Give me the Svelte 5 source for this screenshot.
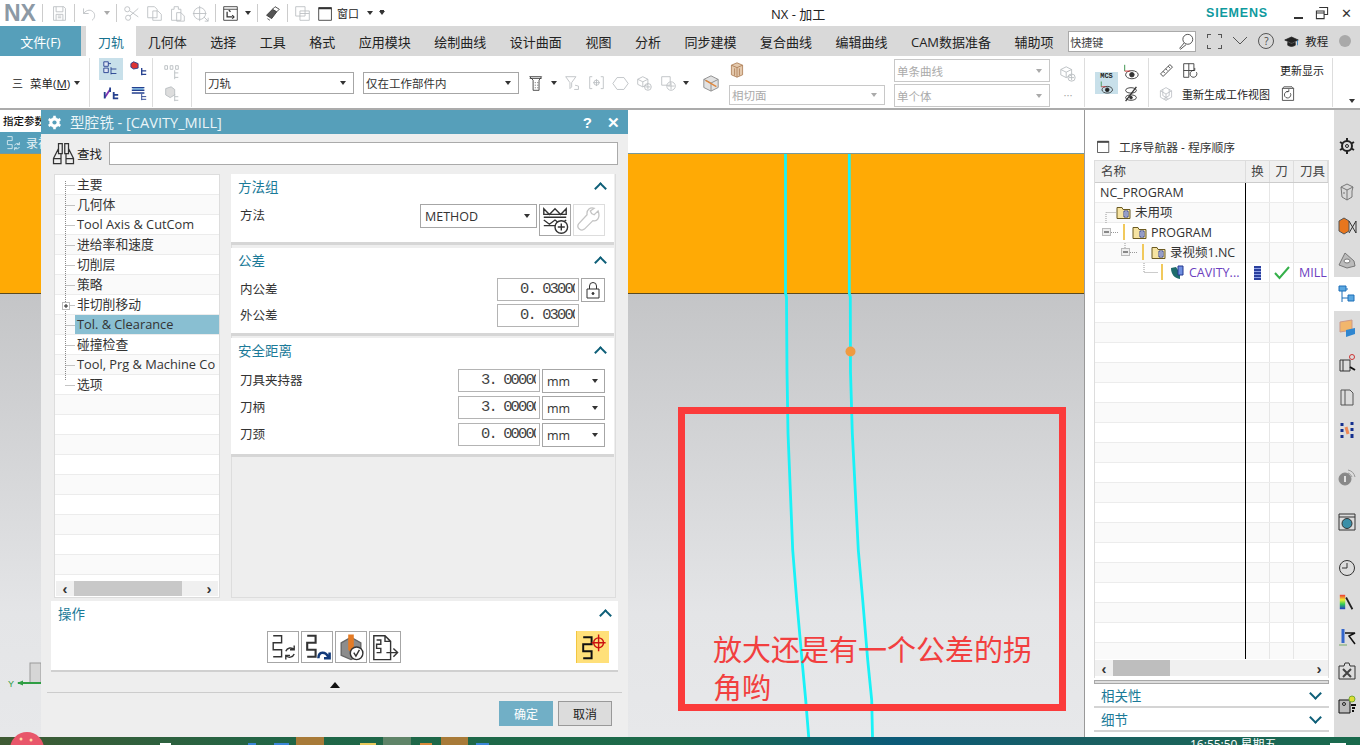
<script lang="ts">
  const tabs = ['几何体', '选择', '工具', '格式', '应用模块', '绘制曲线', '设计曲面', '视图', '分析', '同步建模', '复合曲线', '编辑曲线', 'CAM数据准备', '辅助项'];

  const treeItems = ['主要', '几何体', 'Tool Axis & CutCom', '进给率和速度', '切削层', '策略', '非切削移动', 'Tol. & Clearance', '碰撞检查', 'Tool, Prg & Machine Co', '选项'];
  const treeRows = Array.from({ length: 20 }, (_, i) => treeItems[i] ?? '');

  const navRows = [
    { name: 'NC_PROGRAM', pad: 5 },
    { name: '未用项', pad: 21, icon: 'folder' },
    { name: 'PROGRAM', pad: 37, icon: 'folder' },
    { name: '录视频1.NC', pad: 56, icon: 'folder' },
    { name: 'CAVITY...', pad: 75, icon: 'mill', op: true }
  ];
  const navTable = Array.from({ length: 24 }, (_, i) => navRows[i] ?? { name: '', pad: 0 });

  const icons: Record<string, string> = {
    save: '<path d="M3 2h12l2 2v14H3z"/><path d="M6 2v6h8V2M6 18v-7h8v7M8 13h4M8 15h4"/>',
    undo: '<path d="M3 4v6h6M3 10c4-5 9-5 12-1 2 3 1 7-2 9"/>',
    scissors: '<circle cx="5" cy="5" r="3"/><circle cx="6" cy="15" r="3"/><path d="M8 7l10 7M8 13l10-9"/>',
    copy: '<path d="M2 2h8l3 3v10H2zM8 7h6l4 4v7H8z"/>',
    paste: '<path d="M3 5h3V2h5v3h3v13H3zM9 9h5l4 4v6H9z"/>',
    target: '<circle cx="9" cy="10" r="7"/><path d="M9 1v18M1 10h16M14 14l5 5M19 15v4h-4"/>',
    swap: '<path d="M2 2h16v16H2zM2 5h16"/><path stroke-width="1.5" d="M6 8v6h6M12 12l2 2-2 2M10 8l-2-2"/>',
    win: '<path d="M2 3h15v15H2z"/><path stroke-width="2" d="M2 4h15"/>',
    winFaint: '<path d="M2 2h11v11H2zM7 7h11v11H7zM7 10h11"/>',
    restore: '<path stroke-width="1.5" d="M6 2h12v10h-5M2 7h11v11H2zM2 10h11"/>',
    binoculars: '<path d="M6 2h3v8H6zM11 2h3v8h-3zM6 6L2 14v4h6v-8M14 6l4 8v4h-6v-8M2 14h6M12 14h6"/>',
    gear: '<path stroke-width="3.4" d="M10 1v18M2.200 5.500l15.600 9M2.200 14.500l15.600-9"/><circle cx="10" cy="10" r="6.400" fill="currentColor"/><circle cx="10" cy="10" r="2.800" fill="#569fba" stroke="none"/>',
    gearDark: '<circle cx="10" cy="10" r="5" stroke-width="2"/><circle cx="10" cy="10" r="1.500"/><path stroke-width="2" d="M10 2v3M10 15v3M3 6l2.500 1.500M14.500 12.500L17 14M3 14l2.500-1.500M14.500 7.500L17 6"/>',
    search: '<circle cx="12" cy="7" r="5.500"/><path d="M8 11l-5 6 1 1 6-5"/>',
    lock: '<path d="M4 9h12v9H4zM6.500 9V6a3.500 3.500 0 0 1 7 0v3"/><circle cx="10" cy="13.500" r="1" fill="currentColor"/>',
    wrench: '<path d="M17 3l-3 3-2-1-1-2 3-2c-3-1-6 1-5.500 5L2 13c-2 3 2 6 4.500 4l6.500-6.500c3 1 6-2 4-7.500z"/>',
    methodAdd: '<path d="M2 2l4 4 4-4 4 4 4-4v4H2zM2 8h16M2 10l4 3 4-3 4 3 4-3M2 14h10"/><circle cx="14.500" cy="15" r="4.500" fill="#fff"/><path d="M14.500 12.500v5M12 15h5"/>',
    cube: '<path fill="#e2e2e2" d="M10 2l8 4v9l-8 4-8-4V6z"/><path d="M2 6l8 4 8-4M10 10v9"/><path stroke="#e0863a" stroke-width="1.500" d="M4 7l12 7"/>',
    cubeTop: '<path fill="#e4c9ad" d="M10 1l7 3v12l-7 3-7-3V4z"/><path d="M3 4l7 3 7-3M10 7v12M7 8v9M13 8v9"/>',
    filter: '<path d="M2 2h12l-5 7v5l-2 2V9zM13 12l4 1v4h-5"/>',
    filterDoc: '<path d="M2 2h14l-3 4v12H6V6z"/><path d="M2 4h14M8 9h1M11 9h1M8 12h1M11 12h1M8 15h1M11 15h1"/>',
    bracket: '<path d="M5 2H2v14h3M15 2h3v14h-3"/><circle cx="10" cy="9" r="3"/><path d="M10 5v8M6 9h8"/>',
    hex: '<path d="M6 3h8l5 7-5 7H6l-5-7z"/>',
    cubePlus: '<path d="M8 2l6 3v6l-6 3-6-3V5zM2 5l6 3 6-3M8 8v6"/><circle cx="14" cy="14" r="4"/><path d="M14 11v6M11 14h6"/>',
    squarePlus: '<path d="M2 2h10v10H2z"/><circle cx="13" cy="13" r="5"/><path d="M13 9v8M9 13h8"/>',
    ruler: '<path d="M3 14L14 3l3 3L6 17zM6 11l2 2M9 8l2 2M12 5l2 2"/>',
    regen: '<path d="M2 2h12v8H8v8H2zM8 2v8M2 10h6"/><path d="M17 12a4 4 0 1 1-3-2M12 10h3v-3"/>',
    refresh: '<path d="M3 3h14v15H3zM3 3l2-2h10l2 2"/><path d="M13 9a4 4 0 1 1-3-2M8 7h3V4"/>',
    hub: '<path d="M10 2l7 4v8l-7 4-7-4V6zM3 6l7 4 7-4M10 10v8M6 4v8l7 4M14 4v8l-7 4"/>',
    eye: '<ellipse cx="11" cy="13" rx="7" ry="4.500"/><circle cx="11" cy="13" r="2.500" fill="currentColor"/><path stroke="#2b8a3e" d="M3 2v7"/><path stroke="#c22" d="M3 9h6"/>',
    eyeOff: '<ellipse cx="10" cy="6" rx="6" ry="3"/><ellipse cx="10" cy="14" rx="6" ry="3"/><circle cx="10" cy="14" r="1.500" fill="currentColor"/><path stroke-width="1.500" d="M4 18L16 2"/>',
    hat: '<path fill="currentColor" d="M1 8l9-4 9 4-9 4z"/><path fill="currentColor" d="M5 11v4c3 2 7 2 10 0v-4l-5 2z"/><path stroke="#27b" d="M18 8v7"/>',
    flow1: '<path d="M3 2h6v5H3v5h6v5H3"/><path d="M12 13a3.500 3.500 0 0 1 6-1M18 15a3.500 3.500 0 0 1-6 1M18 9v3h-3M12 19v-3h3"/>',
    flow2: '<path stroke-width="1.500" d="M3 2h6v5H3v5h6v5H3"/><path stroke="#123a7a" stroke-width="1.800" d="M11 18c0-5 5-5 7-1M19 14v4h-4"/>',
    verify: '<path fill="#8c8c8c" stroke="#666" d="M3 7l7-4 7 4v9l-7 3-7-3z"/><path fill="#e47b25" stroke="none" d="M8 1h4v11l-2 2-2-2z"/><circle cx="14" cy="14.500" r="4.500" fill="#fff"/><path d="M12 14l1.500 2.500L16 12"/>',
    report: '<path d="M2 2h8l4 4v13H2zM10 2v4h4"/><path d="M4 5h3v3H4v3h3v3H4"/><path d="M11 14h8M16 11l3 3-3 3"/>',
    flowTarget: '<path stroke="#111" stroke-width="1.400" d="M3 3h6v5H3v5h6v5H3"/><circle cx="14" cy="7" r="3.500" stroke="#c11"/><path stroke="#c11" d="M14 1v12M9 7h10"/>',
    viewA: '<path fill="#d8d8d8" d="M4 5l6-3 6 3-1 4v6l-5 3-5-3z"/><path d="M4 5l6 3 6-3M10 8v10M6 11h2"/>',
    viewB: '<path fill="#e8761d" stroke="#555" d="M2 5l5-3 5 3v10l-5 3-5-3z"/><path d="M12 5l7 12V5l-7 12"/>',
    viewC: '<path fill="#bbb" d="M2 15l6-12 9 8 1 5-8 2z"/><ellipse cx="10" cy="11" rx="3" ry="2" fill="#fff"/>',
    navTree: '<path stroke="#1c6fb8" d="M5 2v16M5 5h6M5 14h6"/><path fill="#5aa7e0" stroke="#1c6fb8" d="M2 2h7v5H2zM11 11h6v6h-6z"/>',
    part: '<path fill="#f2b66c" stroke="#c98" d="M3 3l12-2v10L3 13z"/><path fill="#2f86d0" stroke="none" d="M9 11l9-2v6l-9 3z"/>',
    machine: '<path d="M3 7h10v11H3zM6 7v11"/><path stroke="#111" stroke-width="2" d="M13 14l5 3"/><circle cx="15" cy="4" r="2.500" stroke="#c33"/>',
    book: '<path d="M4 3h9l3 3v12H4zM8 3v15"/>',
    nodes: '<path stroke="#14308f" stroke-width="3" d="M5 2v3M5 8v3M5 14v3M15 1v3M15 7v3M15 13v4"/><path stroke="#e85" stroke-width="3" d="M9 6l2 7"/>',
    info: '<circle cx="8" cy="12" r="6" fill="#888"/><path stroke="#fff" stroke-width="1.500" d="M8 9v6"/><path stroke="#999" d="M11 3c4 1 6 3 7 7M11 6c2 .5 3 2 4 4"/>',
    browser: '<path d="M2 2h16v16H2zM2 5h16"/><circle cx="10" cy="11.500" r="5" fill="#3b8fa8"/>',
    clock: '<circle cx="10" cy="10" r="7.500"/><path d="M10 5v5H5"/>',
    thermo: '<path stroke="#3366cc" stroke-width="3" d="M6 2v14"/><path stroke="#111" stroke-width="1.500" d="M8 6h10l-6 3 6 8"/><path stroke="#7a6" d="M2 18h8"/>',
    tools: '<path d="M2 5h5l1-3h4l1 3h5v13H2z"/><path stroke-width="2" stroke="#444" d="M6 8l8 8M14 8l-8 8"/>',
    roles: '<path fill="#bbb" stroke="#111" d="M2 5h11v13H2z"/><circle cx="7" cy="9" r="1.500"/><path stroke="#111" stroke-width="2" d="M14 10h5M15 13h3M15 16h2"/><circle cx="15" cy="4" r="3" fill="#dd3" stroke="#7a3"/>',
    tb1: '<path fill="#dfe6f5" stroke="#25408f" d="M2 2h5v5H2zM2 9h5v5H2z"/><path stroke="#25408f" d="M10 8v8M10 10h6M10 15h6M7 4h3"/>',
    tb2: '<path fill="#d33" stroke="#25408f" d="M4 2l5 2v5l-5 1-3-2V4z"/><path stroke="#25408f" stroke-width="1.500" d="M13 9v8M13 12h5M13 16h5"/>',
    tb3: '<path stroke="#8232b4" stroke-width="2" d="M3 15l6-9"/><path stroke="#25408f" stroke-width="2" d="M3 9v7M9 4v5M13 9v8M13 12h5M13 16h5"/>',
    tb4: '<path stroke="#25408f" stroke-width="1.600" d="M2 4h14M2 7h14M2 10h14"/><path stroke="#2c8fd0" d="M3 5.500h12"/><path stroke="#25408f" d="M13 11v7M13 14h5M13 17h5"/>',
    tb5: '<path d="M2 3h3v4H2zM8 3h3v4H8zM14 3h3v4h-3zM13 8v10M13 11h4M13 16h4"/>',
    tb6: '<path fill="#ddd" d="M3 4l6-2 4 3v6l-5 3-5-3zM13 10v8M13 13h4M13 17h4"/>',
    eraser: '<path fill="#555" d="M3 12l7-7 5 3-6 8z"/><path d="M10 5l3-3 5 3-3 3"/><path stroke="#555" d="M4 16l3 2"/>'
  };

  const sideIcons = [
    { i: 'gearDark', c: '#222' },
    { i: 'viewA', c: '#777', gap: true },
    { i: 'viewB', c: '#333' },
    { i: 'viewC', c: '#777' },
    { i: 'navTree', c: '#1c6fb8', on: true },
    { i: 'part', c: '#c98' },
    { i: 'machine', c: '#333' },
    { i: 'book', c: '#555' },
    { i: 'nodes', c: '#14308f' },
    { i: 'info', c: '#888', gap: true },
    { i: 'browser', c: '#333', gap: true },
    { i: 'clock', c: '#333', gap: true },
    { i: 'rainbow', c: '#333' },
    { i: 'thermo', c: '#333' },
    { i: 'tools', c: '#333' },
    { i: 'roles', c: '#222' }
  ];

  const opIcons = ['flow1', 'flow2', 'verify', 'report'];
  const line1 = '785.5,44 785.5,183 786.5,187 787,262 788,323 792.7,440 796.7,490 802,550 805.7,590 808.7,627';
  const line2 = '849.3,44 849.3,183 850.3,187 850.5,262 852.3,323 858.3,440 862.7,490 867.7,550 871.7,590 872.5,627';

  const trayMarks = [
    { x: 160, w: 11, color: '#fff' },
    { x: 248, w: 8, color: '#3b86d8' },
    { x: 274, w: 15, color: '#3b86d8' },
    { x: 296, w: 28, color: '#a87a38', tall: true },
    { x: 360, w: 16, color: '#e8c95c' },
    { x: 383, w: 28, color: '#5f8468', tall: true },
    { x: 420, w: 12, color: '#d9893a' },
    { x: 441, w: 27, color: '#a87a38', tall: true },
    { x: 476, w: 13, color: '#3b86d8' },
    { x: 1330, w: 16, color: '#fff' }
  ];
</script>

{#snippet ic(name: string, size = 18)}
  <svg class="ic" width={size} height={size} viewBox="0 0 20 20" fill="none" stroke="currentColor" stroke-width="1">{@html icons[name]}</svg>
{/snippet}

<div class="app">
  <header class="titlebar">
    <div class="quick">
      <span class="nx">NX</span>
      <i class="vsep first"></i>
      <span class="faint">{@render ic('save', 17)}</span>
      <i class="vsep"></i>
      <span class="faint">{@render ic('undo', 17)}</span>
      <i class="arrow faintarrow"></i>
      <i class="vsep"></i>
      <span class="faint">{@render ic('scissors', 17)}</span>
      <span class="faint">{@render ic('copy', 17)}</span>
      <span class="faint">{@render ic('paste', 17)}</span>
      <span class="faint">{@render ic('target', 17)}</span>
      <i class="vsep"></i>
      <span class="dark">{@render ic('swap', 17)}</span>
      <i class="arrow"></i>
      <i class="vsep"></i>
      <span class="dark">{@render ic('eraser', 17)}</span>
      <i class="vsep"></i>
      <span class="faint">{@render ic('winFaint', 17)}</span>
      <span class="dark">{@render ic('win', 17)}</span>
      <span class="winlabel">窗口</span>
      <i class="arrow"></i>
      <i class="arrow underline"></i>
    </div>
    <div class="apptitle">NX - 加工</div>
    <div class="brand">SIEMENS</div>
    <div class="winbtns">
      <span class="wmin"></span>
      <span class="dark">{@render ic('restore', 14)}</span>
      <span class="wclose">✕</span>
    </div>
  </header>

  <nav class="tabbar">
    <div class="filetab">文件(F)</div>
    <div class="tab active">刀轨</div>
    {#each tabs as t}
      <div class="tab">{t}</div>
    {/each}
    <div class="cmdfind">
      <span>快捷键</span>
      {@render ic('search', 18)}
    </div>
    <div class="tabtools">
      <span class="corners"></span>
      <svg width="16" height="10" viewBox="0 0 16 10" fill="none" stroke="#555"><path d="M1 1l7 7 7-7" /></svg>
      <span class="help">?</span>
      <span class="hat">{@render ic('hat', 15)}</span>
      <span class="learn">教程</span>
      <span class="orb"></span>
    </div>
  </nav>

  <section class="ribbon">
    <div class="rgroup menu">
      <span class="burger">三</span>
      <span>菜单(<u>M</u>)</span>
      <i class="arrow"></i>
    </div>
    <div class="rgroup quad">
      <span class="qbtn on">{@render ic('tb1', 18)}</span>
      <span class="qbtn">{@render ic('tb2', 18)}</span>
      <span class="qbtn">{@render ic('tb3', 18)}</span>
      <span class="qbtn">{@render ic('tb4', 18)}</span>
    </div>
    <div class="rgroup duo">
      <span class="faint">{@render ic('tb5', 18)}</span>
      <span class="faint">{@render ic('tb6', 18)}</span>
    </div>
    <div class="rgroup filters">
      <div class="sel w149">刀轨<i class="arrow"></i></div>
      <div class="sel w156">仅在工作部件内<i class="arrow"></i></div>
      <div class="snapicons">
        <span class="dark">{@render ic('filterDoc', 17)}</span>
        <i class="arrow snaparrow"></i>
        <span class="faint">{@render ic('filter', 17)}</span>
        <span class="faint">{@render ic('bracket', 17)}</span>
        <span class="faint">{@render ic('hex', 17)}</span>
        <span class="faint">{@render ic('cubePlus', 17)}</span>
        <span class="faint">{@render ic('squarePlus', 17)}</span>
        <i class="arrow snaparrow"></i>
        <span class="cube">{@render ic('cube', 18)}</span>
      </div>
      <div class="tangent">
        <span class="smallcube">{@render ic('cubeTop', 16)}</span>
        <div class="sel off w156">相切面<i class="arrow"></i></div>
      </div>
      <div class="curvesel">
        <div class="sel off w156">单条曲线<i class="arrow"></i></div>
        <div class="sel off w156">单个体<i class="arrow"></i></div>
      </div>
      <div class="curveside">
        <span class="faint">{@render ic('cubePlus', 18)}</span>
        <span class="dots">···</span>
      </div>
    </div>
    <div class="rgroup mcs">
      <span class="mcsbtn"><b>MCS</b>{@render ic('eye', 15)}</span>
      <div class="eyes">
        <span class="dark">{@render ic('eye', 18)}</span>
        <span class="dark">{@render ic('eyeOff', 18)}</span>
      </div>
    </div>
    <div class="rgroup update">
      <span class="dark">{@render ic('ruler', 17)}</span>
      <span class="dark">{@render ic('regen', 17)}</span>
      <span class="u3">更新显示</span>
      <span class="faint">{@render ic('hub', 16)}</span>
      <span class="u2">重新生成工作视图</span>
      <span class="dark">{@render ic('refresh', 16)}</span>
    </div>
    <div class="rtail"><i class="arrow"></i></div>
  </section>

  <main class="workspace">
    <div class="viewport">
      <div class="cuetabs">
        <div class="cue">指定参数</div>
        <div class="cuebar">{@render ic('flow1', 16)}<span>录视频1.NC</span></div>
      </div>
      <div class="solid"></div>
      <div class="ground"></div>

      <svg class="paths" width="1084" height="627" fill="none">
        <polyline points={line1} stroke="#19f2f7" stroke-width="2.8" />
        <polyline points={line2} stroke="#19f2f7" stroke-width="2.8" />
        <circle cx="850.5" cy="241.5" r="5" fill="#f09a40" />
        <rect x="30" y="553" width="11" height="20" fill="#d6d6d6" stroke="#999" />
        <path d="M18 573h23" stroke="#2f9e44" stroke-width="2" />
        <path d="M17 573l6-2.5v5z" fill="#2f9e44" />
        <text x="8" y="577" font-size="9" fill="#2f9e44" font-family="Liberation Sans">Y</text>
      </svg>

      <div class="annotation">
        <p>放大还是有一个公差的拐角哟</p>
      </div>

      <div class="dialog">
        <div class="dlgtitle">
          <span class="dlggear">{@render ic('gear', 15)}</span>
          <span class="dlgname">型腔铣 - [CAVITY_MILL]</span>
          <span class="dlghelp">?</span>
          <span class="dlgclose">✕</span>
        </div>

        <div class="finder">
          <span class="dark">{@render ic('binoculars', 25)}</span>
          <span>查找</span>
          <div class="findinput"></div>
        </div>

        <div class="dlgmain">
          <div class="pagetree">
            <div class="treerows">
              {#each treeRows as row, i}
                <div class="treerow" class:sel-row={i === 7}><span>{row}</span></div>
              {/each}
            </div>
            <svg class="guides" width="24" height="215" fill="none" stroke="#8a8a8a" stroke-dasharray="1 1">
              <path d="M10.5 6V206" />
              {#each treeItems as _, i}
                <path d="M10.5 {10.5 + i * 20}H20" />
              {/each}
              <rect x="7.5" y="127.5" width="7" height="7" fill="#fff" stroke="#bbb" stroke-dasharray="none" />
              <path d="M9 131h4M11 129v4" stroke="#222" stroke-dasharray="none" />
            </svg>
            <div class="hscroll">
              <span class="chev">‹</span>
              <span class="thumb"></span>
              <span class="chev">›</span>
            </div>
          </div>

          <div class="pages">
            <div class="panel p1">
              <div class="phead"><span>方法组</span><i class="up"></i></div>
              <div class="prow">
                <label>方法</label>
                <div class="ctl">
                  <div class="dd method">METHOD<i class="arrow"></i></div>
                  <span class="sq">{@render ic('methodAdd', 28)}</span>
                  <span class="sq off">{@render ic('wrench', 26)}</span>
                </div>
              </div>
            </div>
            <div class="panel p2">
              <div class="phead"><span>公差</span><i class="up"></i></div>
              <div class="prow r26">
                <label>内公差</label>
                <div class="ctl"><div class="num"><span>0. 03000</span></div><span class="sq lock">{@render ic('lock', 20)}</span></div>
              </div>
              <div class="prow r26">
                <label>外公差</label>
                <div class="ctl"><div class="num"><span>0. 03000</span></div><span class="blank"></span></div>
              </div>
            </div>
            <div class="panel p3">
              <div class="phead"><span>安全距离</span><i class="up"></i></div>
              {#each [['刀具夹持器', '3. 00000'], ['刀柄', '3. 00000'], ['刀颈', '0. 00000']] as [label, value]}
                <div class="prow r27">
                  <label>{label}</label>
                  <div class="ctl"><div class="num"><span>{value}</span></div><div class="dd unit">mm<i class="arrow"></i></div></div>
                </div>
              {/each}
            </div>
          </div>
        </div>

        <div class="actions">
          <div class="phead"><span>操作</span><i class="up"></i></div>
          <div class="opbar">
            {#each opIcons as op}
              <span class="sq opbtn">{@render ic(op, 28)}</span>
            {/each}
            <span class="sq hot">{@render ic('flowTarget', 28)}</span>
          </div>
        </div>

        <div class="expander"><i class="uptri"></i></div>

        <div class="dlgfoot">
          <button class="ok">确定</button>
          <button class="cancel">取消</button>
        </div>
      </div>
    </div>

    <aside class="navigator">
      <div class="navtitle">
        <span class="dark">{@render ic('win', 15)}</span>
        <span>工序导航器 - 程序顺序</span>
      </div>
      <div class="navtable">
        <div class="navhead">
          <div>名称</div>
          <div class="cc">换</div>
          <div class="cc">刀</div>
          <div>刀具</div>
        </div>
        <div class="navbody">
          {#each navTable as r}
            <div class="navrow">
              <div class="namecell" class:op={r.op} style:padding-left="{r.pad}px">
                {#if r.icon === 'folder'}
                  <svg width="15" height="14" viewBox="0 0 15 14"><path d="M1 2.500h5l1 2h7v9H1z" fill="#f6e3a1" stroke="#6b5a20" /><path d="M8 6h4v6H8z" fill="#fff" stroke="#2b3a8f" /><path d="M9 8h2M9 10h2" stroke="#2b3a8f" /></svg>
                {:else if r.icon === 'mill'}
                  <svg width="15" height="15" viewBox="0 0 15 15"><path d="M1 3c0 6 3 10 9 11V8L6 2z" fill="#1d6b6b" /><path d="M8 1h5v9H8z" fill="#6f8fe0" stroke="#23368f" /></svg>
                {/if}
                <span>{r.name}</span>
              </div>
              <div class="cc">{#if r.op}<span class="stripe"></span>{/if}</div>
              <div class="cc">{#if r.op}<svg width="16" height="14" viewBox="0 0 16 14" fill="none" stroke="#35b04a" stroke-width="2"><path d="M1 7l4.5 5L15 1" /></svg>{/if}</div>
              <div class="toolcell">{#if r.op}MILL{/if}</div>
            </div>
          {/each}
          <svg class="navguides" width="80" height="100" fill="none">
            <path d="M11 40V29.5H21" stroke="#999" stroke-dasharray="1 1" />
            <rect x="7.5" y="45.5" width="8" height="7" fill="#eee" stroke="#bbb" />
            <path d="M9 49h5" stroke="#222" />
            <path d="M16 49.5h7M30 60V69" stroke="#999" stroke-dasharray="1 1" />
            <path d="M29 41v16M48 61v16M67 81v16" stroke="#f1c95c" stroke-width="2" />
            <rect x="26.5" y="65.5" width="8" height="7" fill="#eee" stroke="#bbb" />
            <path d="M28 69h5" stroke="#222" />
            <path d="M35 69.5h7M49 80v9.5H63" stroke="#999" stroke-dasharray="1 1" />
          </svg>
        </div>
        <div class="navscroll">
          <span class="chev">‹</span>
          <span class="navthumb"></span>
          <span class="chev">›</span>
        </div>
      </div>
      <div class="sash"></div>
      <div class="fold"><span>相关性</span><i class="down"></i></div>
      <div class="fold"><span>细节</span><i class="down"></i></div>
    </aside>

    <aside class="resbar">
      {#each sideIcons as s}
        <div class="resitem" class:on={s.on} class:gap={s.gap} style:color={s.c}>
          {#if s.i === 'rainbow'}
            <svg width="18" height="18" viewBox="0 0 20 20" fill="none">
              <defs><linearGradient id="rb" x1="0" y1="0" x2="0" y2="1"><stop offset="0" stop-color="#e33" /><stop offset=".35" stop-color="#ee3" /><stop offset=".65" stop-color="#3c5" /><stop offset="1" stop-color="#23c" /></linearGradient></defs>
              <rect x="2" y="2" width="6" height="16" fill="url(#rb)" />
              <path d="M9 5l7 13" stroke="#222" stroke-width="2" />
            </svg>
          {:else}
            {@render ic(s.i, 20)}
          {/if}
        </div>
      {/each}
    </aside>
  </main>

  <footer class="taskbar">
    <svg class="ball" width="34" height="34" viewBox="0 0 34 34"><circle cx="17" cy="17" r="17" fill="#e8566a" /><circle cx="11" cy="7" r="1.500" fill="#ffd9a0" /><circle cx="21" cy="8" r="1.500" fill="#ffd9a0" /></svg>
    {#each trayMarks as m}
      <span class="mark" class:tall={m.tall} style:left="{m.x}px" style:width="{m.w}px" style:background={m.color}></span>
    {/each}
    <span class="clocktext">16:55:50 星期五</span>
  </footer>
</div>

<style>
  :global(body) {
    margin: 0;
    overflow: hidden;
  }

  .app {
    --blue: #569fba;
    --teal: #1b7a98;
    position: relative;
    display: flex;
    flex-direction: column;
    width: 1360px;
    height: 745px;
    overflow: hidden;
    background: #fff;
    color: #222;
    font-family: "Open Sans", "Noto Sans CJK SC", sans-serif;
    font-size: 12px;
  }

  .ic {
    display: block;
    flex: none;
  }

  .faint {
    color: #b9bdc1;
  }

  .dark {
    color: #333;
  }

  i {
    display: block;
    flex: none;
  }

  .arrow {
    width: 0;
    height: 0;
    border-left: 3.5px solid transparent;
    border-right: 3.5px solid transparent;
    border-top: 4px solid #333;
  }

  .faintarrow {
    border-top-color: #aaa;
  }

  .underline {
    box-shadow: 0 -2px 0 -1px #333;
  }

  /* title row */
  .titlebar {
    display: flex;
    align-items: center;
    height: 26px;
    flex: none;
  }

  .quick {
    display: flex;
    align-items: center;
    gap: 6px;
    width: 771px;
    padding-left: 4px;
    box-sizing: border-box;
  }

  .nx {
    font: bold 23px "Liberation Sans", sans-serif;
    color: #8c99a5;
    width: 32px;
  }

  .vsep {
    width: 1px;
    height: 18px;
    background: #ccc;
  }

  .vsep.first {
    margin-right: 2px;
  }

  .winlabel {
    font-size: 11px;
    margin-left: -3px;
    margin-right: 2px;
  }

  .apptitle {
    font-size: 13px;
    width: 56px;
    white-space: nowrap;
  }

  .brand {
    margin-left: 379px;
    width: 70px;
    font: bold 12.5px "Liberation Sans", sans-serif;
    letter-spacing: 0.8px;
    color: #0f9a9e;
  }

  .winbtns {
    display: flex;
    align-items: center;
    gap: 12px;
    margin-left: 18px;
  }

  .wmin {
    width: 9px;
    height: 2px;
    background: #333;
    margin-top: 10px;
  }

  .wclose {
    font-size: 13px;
    line-height: 14px;
    color: #333;
  }

  /* tab row */
  .tabbar {
    display: flex;
    align-items: stretch;
    height: 30px;
    flex: none;
    background: #d9d9d9;
    font-size: 13px;
  }

  .filetab {
    width: 81px;
    margin-right: 5px;
    background: var(--blue);
    color: #fff;
    display: flex;
    align-items: center;
    justify-content: center;
  }

  .tab {
    padding: 0 11.75px;
    display: flex;
    align-items: center;
    white-space: nowrap;
    color: #222;
  }

  .tab.active {
    background: #fff;
    color: #17728f;
    padding: 0 12px;
  }

  .cmdfind {
    width: 128px;
    height: 21px;
    margin: 5px 0 0 3px;
    box-sizing: border-box;
    background: #fff;
    border: 1px solid #aaa;
    display: flex;
    align-items: center;
    justify-content: space-between;
    padding: 0 0 0 1px;
    font-size: 11px;
    color: #444;
  }

  .tabtools {
    display: flex;
    align-items: center;
    margin-left: 11px;
    gap: 10px;
  }

  .corners {
    width: 15px;
    height: 15px;
    background:
      linear-gradient(#555, #555) 0 0 / 4px 1px no-repeat,
      linear-gradient(#555, #555) 0 0 / 1px 4px no-repeat,
      linear-gradient(#555, #555) 100% 0 / 4px 1px no-repeat,
      linear-gradient(#555, #555) 100% 0 / 1px 4px no-repeat,
      linear-gradient(#555, #555) 0 100% / 4px 1px no-repeat,
      linear-gradient(#555, #555) 0 100% / 1px 4px no-repeat,
      linear-gradient(#555, #555) 100% 100% / 4px 1px no-repeat,
      linear-gradient(#555, #555) 100% 100% / 1px 4px no-repeat;
  }

  .help {
    width: 14px;
    height: 14px;
    border: 1px solid #555;
    border-radius: 50%;
    font-size: 10px;
    line-height: 14px;
    text-align: center;
    color: #444;
  }

  .hat {
    color: #222;
  }

  .learn {
    font-size: 11.5px;
    margin-left: -4px;
  }

  .orb {
    width: 12px;
    height: 12px;
    border-radius: 50%;
    background: #a9a9a9;
    margin-left: 1px;
  }

  /* ribbon */
  .ribbon {
    display: grid;
    grid-template-columns: 90px 63px 39px 893px 64px 184px 27px;
    height: 54px;
    flex: none;
    box-sizing: border-box;
    border-bottom: 2px solid #ababab;
    font-size: 11.5px;
  }

  .rgroup {
    margin: 2px 0 3px;
    border-right: 1px solid #ddd;
    box-sizing: border-box;
  }

  .menu {
    display: flex;
    align-items: center;
    padding-left: 12px;
    gap: 4px;
  }

  .burger {
    font-size: 11px;
    margin-right: 3px;
  }

  .quad {
    display: grid;
    grid-template-columns: 24px 24px;
    grid-auto-rows: 22px;
    padding: 0 0 0 9px;
    gap: 2px 4px;
  }

  .qbtn {
    display: flex;
    align-items: center;
    justify-content: center;
  }

  .qbtn.on {
    background: #c8e0ea;
  }

  .duo {
    display: flex;
    flex-direction: column;
    align-items: center;
    justify-content: center;
    gap: 4px;
  }

  .filters {
    display: flex;
    align-items: center;
    padding: 1px 0 0 13px;
    gap: 9px;
  }

  .sel {
    box-sizing: border-box;
    height: 22px;
    display: flex;
    align-items: center;
    justify-content: space-between;
    padding: 0 7px 0 2px;
    background: #fff;
    border: 1px solid #a6a6a6;
    color: #333;
    flex: none;
  }

  .w149 {
    width: 149px;
  }

  .w156 {
    width: 156px;
  }

  .sel.off {
    border-color: #c8c8c8;
    color: #aaa;
  }

  .sel.off .arrow {
    border-top-color: #aaa;
  }

  .snapicons {
    display: flex;
    align-items: center;
    width: 192px;
    gap: 7px;
  }

  .snaparrow {
    margin-left: -1px;
  }

  .cube {
    margin-left: auto;
    color: #8a8a8a;
  }

  .tangent {
    display: flex;
    flex-direction: column;
    gap: 7px;
  }

  .smallcube {
    color: #a9794f;
  }

  .tangent .sel {
    height: 20px;
  }

  .curvesel {
    display: flex;
    flex-direction: column;
    gap: 2px;
  }

  .curvesel .sel {
    height: 23px;
  }

  .curveside {
    display: flex;
    flex-direction: column;
    align-items: center;
    gap: 6px;
    width: 18px;
  }

  .dots {
    color: #aaa;
    line-height: 12px;
  }

  .mcs {
    display: flex;
    align-items: center;
    padding-left: 10px;
    gap: 4px;
  }

  .mcsbtn {
    width: 23px;
    height: 22px;
    background: #c8e0ea;
    display: flex;
    flex-direction: column;
    align-items: center;
  }

  .mcsbtn b {
    font: bold 7px/8px "Liberation Mono", monospace;
  }

  .eyes {
    display: flex;
    flex-direction: column;
    gap: 4px;
  }

  .update {
    display: grid;
    grid-template-columns: 24px 98px auto;
    grid-auto-rows: 24px;
    align-items: center;
    padding-left: 9px;
  }

  .u3 {
    white-space: nowrap;
    font-size: 11px;
  }

  .u2 {
    white-space: nowrap;
    font-size: 11px;
  }

  .rtail {
    display: flex;
    align-items: flex-end;
    justify-content: flex-end;
    padding: 0 5px 7px 0;
  }

  /* main area */
  .workspace {
    display: flex;
    flex: 1;
    min-height: 0;
  }

  .viewport {
    position: relative;
    width: 1085px;
    flex: none;
    display: flex;
    flex-direction: column;
    box-sizing: border-box;
    border-right: 1px solid #999;
  }

  .cuetabs {
    height: 44px;
    flex: none;
    box-sizing: border-box;
    border-bottom: 1px solid #76989a;
  }

  .cue {
    height: 22px;
    width: 41px;
    overflow: hidden;
    line-height: 22px;
    padding-left: 3px;
    box-sizing: border-box;
    font-size: 10.5px;
    font-weight: 500;
    color: #111;
    white-space: nowrap;
  }

  .cuebar {
    display: flex;
    align-items: center;
    gap: 5px;
    height: 21px;
    width: 41px;
    overflow: hidden;
    padding-left: 5px;
    box-sizing: border-box;
    background: var(--blue);
    color: #e6f2f6;
    white-space: nowrap;
  }

  .cuebar span {
    min-width: 0;
    overflow: hidden;
  }

  .solid {
    height: 140px;
    flex: none;
    box-sizing: border-box;
    background: #ffaa05;
    border-bottom: 1px solid #5a4a20;
  }

  .ground {
    flex: 1;
    background: linear-gradient(#c4c5c7 0%, #e4e5e7 72%, #e7e8ea 100%);
  }

  .paths {
    position: absolute;
    left: 0;
    top: 0;
  }

  .annotation {
    position: absolute;
    left: 678px;
    top: 297px;
    width: 388px;
    height: 304px;
    box-sizing: border-box;
    border: 7px solid #fb3b3b;
  }

  .annotation p {
    position: absolute;
    left: 28px;
    bottom: -3px;
    width: 330px;
    margin: 0;
    color: #f23f3f;
    font-size: 29px;
    line-height: 38px;
  }

  /* dialog */
  .dialog {
    position: absolute;
    left: 41px;
    top: 0;
    width: 587px;
    height: 627px;
    display: flex;
    flex-direction: column;
    background: #eee;
  }

  .dlgtitle {
    display: flex;
    align-items: center;
    height: 24px;
    flex: none;
    background: var(--blue);
    color: #fff;
    padding: 0 8px 0 6px;
  }

  .dlggear {
    width: 23px;
  }

  .dlgname {
    font-size: 14.6px;
    flex: 1;
    color: #eaf4f7;
    padding-bottom: 1px;
  }

  .dlghelp {
    font: bold 15px "Liberation Sans", sans-serif;
    margin-right: 15px;
  }

  .dlgclose {
    font-size: 15px;
    font-weight: bold;
    line-height: 16px;
  }

  .finder {
    display: flex;
    align-items: center;
    height: 23px;
    margin: 8px 10px 0;
    flex: none;
    font-size: 12.5px;
    gap: 1px;
  }

  .findinput {
    flex: 1;
    height: 23px;
    box-sizing: border-box;
    margin-left: 6px;
    background: #fff;
    border: 1px solid #aaa;
  }

  .dlgmain {
    display: flex;
    gap: 11px;
    height: 424px;
    margin: 9px 12px 0 13px;
    flex: none;
  }

  .pagetree {
    position: relative;
    display: flex;
    flex-direction: column;
    width: 166px;
    flex: none;
    box-sizing: border-box;
    background: #fff;
    border: 1px solid #ddd;
  }

  .treerows {
    flex: 1;
    min-height: 0;
    overflow: hidden;
  }

  .treerow {
    height: 20px;
    box-sizing: border-box;
    padding-left: 20px;
    border-bottom: 1px solid #ececec;
    font-size: 12.8px;
    line-height: 19px;
    white-space: nowrap;
    overflow: hidden;
    color: #333;
  }

  .treerow:nth-child(even) {
    background: #fafafa;
  }

  .treerow span {
    display: block;
    padding-left: 2px;
    height: 19px;
  }

  .treerow.sel-row span {
    background: #89bfd2;
  }

  .guides {
    position: absolute;
    left: 0;
    top: 0;
  }

  .hscroll {
    display: flex;
    align-items: center;
    height: 15px;
    margin: 0 1px 1px;
    flex: none;
    background: #f0f0f0;
  }

  .chev {
    width: 18px;
    flex: none;
    text-align: center;
    font: bold 15px/13px "Liberation Sans", sans-serif;
    color: #333;
  }

  .thumb {
    width: 108px;
    height: 15px;
    background: #c8c8c8;
  }

  .hscroll .chev:last-child {
    margin-left: auto;
  }

  .pages {
    flex: 1;
    box-shadow: inset 1px 0 #ddd, inset -1px 0 #ddd, inset 0 -1px #ddd;
  }

  .panel {
    box-sizing: border-box;
    width: 383px;
    background: #fff;
    border-bottom: 3px solid #d6d6d6;
    font-size: 12.5px;
    color: #333;
  }

  .p1 {
    height: 71px;
    margin-bottom: 3px;
  }

  .p2 {
    height: 88px;
    margin-bottom: 2px;
  }

  .p3 {
    height: 119px;
  }

  .phead {
    display: flex;
    align-items: center;
    justify-content: space-between;
    box-sizing: border-box;
    height: 26px;
    padding: 0 9px 2px 7px;
    font-size: 13.5px;
    color: var(--teal);
  }

  .up,
  .down {
    width: 7px;
    height: 7px;
    border-top: 2px solid #0e5f78;
    border-left: 2px solid #0e5f78;
  }

  .up {
    transform: rotate(45deg);
    margin-top: 4px;
  }

  .down {
    transform: rotate(225deg);
    margin-top: -4px;
  }

  .prow {
    display: flex;
    justify-content: space-between;
    padding: 4px 9px 0 9px;
  }

  .prow label {
    line-height: 24px;
  }

  .r26 {
    height: 26px;
    padding-top: 0;
  }

  .p2 .phead {
    margin-bottom: 4px;
  }

  .r27 {
    height: 27px;
    padding-top: 0;
  }

  .p3 .phead {
    margin-bottom: 5px;
  }

  .ctl {
    display: flex;
    align-items: flex-start;
    gap: 2px;
  }

  .dd {
    box-sizing: border-box;
    height: 24px;
    display: flex;
    align-items: center;
    justify-content: space-between;
    border: 1px solid #a6a6a6;
    background: #fff;
    padding: 0 6px 0 4px;
    color: #333;
    font-size: 12.5px;
  }

  .method {
    width: 117px;
  }

  .unit {
    width: 63px;
  }

  .num {
    box-sizing: border-box;
    width: 82px;
    height: 23px;
    border: 1px solid #b4b4b4;
    background: #fff;
    padding: 0 0 0 22px;
  }

  .num span {
    display: block;
    width: 55px;
    overflow: hidden;
    white-space: pre;
    font: 15.5px/21px "Liberation Mono", monospace;
    letter-spacing: -1.9px;
    color: #444;
  }

  .blank {
    width: 24px;
  }

  .sq {
    box-sizing: border-box;
    width: 32px;
    height: 32px;
    display: flex;
    align-items: center;
    justify-content: center;
    border: 1px solid #a6a6a6;
    background: #fff;
    color: #333;
  }

  .sq.off {
    border-color: #ddd;
    color: #c4c4c4;
  }

  .sq.lock {
    width: 24px;
    height: 24px;
  }

  /* operations */
  .actions {
    box-sizing: border-box;
    width: 567px;
    height: 71px;
    margin: 3px 0 0 10px;
    flex: none;
    background: #fff;
    border-bottom: 2px solid #d0d0d0;
  }

  .actions .phead {
    padding: 0 8px 2px 7px;
    margin-bottom: 4px;
  }

  .opbar {
    position: relative;
    display: flex;
    justify-content: flex-start;
    gap: 2px;
    padding-left: 216px;
  }

  .hot {
    position: absolute;
    right: 9px;
    top: 0;
    width: 33px;
    border: 0;
    border-left: 1px solid #f2c640;
    background: #ffe07a;
  }

  .expander {
    display: flex;
    justify-content: center;
    align-items: center;
    height: 20px;
    margin: 0 6px;
    flex: none;
    border-bottom: 1px solid #ccc;
  }

  .uptri {
    width: 0;
    height: 0;
    margin-top: 6px;
    border-left: 5px solid transparent;
    border-right: 5px solid transparent;
    border-bottom: 6px solid #111;
  }

  .dlgfoot {
    display: flex;
    justify-content: flex-end;
    gap: 5px;
    padding: 8px 16px 0 0;
  }

  .dlgfoot button {
    width: 54px;
    height: 25px;
    padding: 0;
    font: 12px "Noto Sans CJK SC", sans-serif;
    box-sizing: border-box;
  }

  .ok {
    background: #71afc6;
    border: 0;
    color: #fff;
  }

  .cancel {
    background: #dcdcdc;
    border: 1px solid #999;
    color: #222;
  }

  /* navigator */
  .navigator {
    width: 249px;
    flex: none;
    box-sizing: border-box;
    padding: 0 5px 0 9px;
    background: #fff;
    display: flex;
    flex-direction: column;
  }

  .navtitle {
    display: flex;
    align-items: center;
    gap: 8px;
    height: 50px;
    padding: 22px 0 0 2px;
    box-sizing: border-box;
    font-size: 11.8px;
    color: #333;
    flex: none;
  }

  .navtable {
    box-sizing: border-box;
    height: 518px;
    flex: none;
    border: 1px solid #ddd;
    border-bottom: 0;
    display: flex;
    flex-direction: column;
  }

  .navhead,
  .navrow {
    display: grid;
    grid-template-columns: 151px 24px 24px 1fr;
  }

  .navhead {
    height: 22px;
    flex: none;
    background: #f0f0f0;
    box-sizing: border-box;
    border-bottom: 1px solid #ccc;
    line-height: 21px;
    font-size: 12.5px;
    color: #444;
  }

  .navhead > div {
    border-right: 1px solid #ddd;
    padding-left: 6px;
  }

  .navhead > .cc {
    padding: 0;
    text-align: center;
  }

  .navbody {
    position: relative;
    height: 476px;
    flex: none;
    overflow: hidden;
  }

  .navrow {
    height: 20px;
    box-sizing: border-box;
    border-bottom: 1px solid #ececec;
    font-size: 12.5px;
    line-height: 19px;
  }

  .navrow:nth-child(even) {
    background: #fafafa;
  }

  .namecell {
    display: flex;
    align-items: center;
    gap: 4px;
    box-sizing: border-box;
    border-right: 1px solid #000;
    margin-bottom: -1px;
    padding-bottom: 2px;
    color: #333;
    white-space: nowrap;
    overflow: hidden;
  }

  .namecell.op,
  .toolcell {
    color: #6d3fc0;
  }

  .cc {
    display: flex;
    align-items: center;
    justify-content: center;
    border-right: 1px solid #e6e6e6;
  }

  .toolcell {
    padding-left: 5px;
  }

  .stripe {
    width: 7px;
    height: 14px;
    background: repeating-linear-gradient(#2a3f9e 0 2px, #8fa2e6 2px 3px);
  }

  .navguides {
    position: absolute;
    left: 0;
    top: 0;
  }

  .navscroll {
    display: flex;
    align-items: center;
    height: 16px;
    margin-top: 1px;
    flex: none;
    background: #f0f0f0;
  }

  .navthumb {
    width: 57px;
    height: 16px;
    background: #bebebe;
  }

  .navscroll .chev:last-child {
    margin-left: auto;
  }

  .sash {
    height: 4px;
    flex: none;
    box-sizing: border-box;
    margin-top: 2px;
    background: #ddd;
    border: 1px solid #a8a8a8;
  }

  .fold {
    display: flex;
    align-items: center;
    justify-content: space-between;
    height: 24px;
    flex: none;
    box-sizing: border-box;
    padding: 0 9px 0 7px;
    border-bottom: 2px solid #d4d4d4;
    font-size: 13.5px;
    color: var(--teal);
  }

  /* resource bar */
  .resbar {
    flex: 1;
    background: #dcdcdc;
    padding-top: 19px;
    box-sizing: border-box;
  }

  .resitem {
    height: 34.2px;
    display: flex;
    align-items: center;
    justify-content: center;
  }

  .resitem.on {
    background: #fff;
  }

  .resitem.gap {
    margin-top: 11.5px;
  }

  /* taskbar */
  .taskbar {
    position: relative;
    height: 8px;
    flex: none;
    background: linear-gradient(90deg, #3f5a33 0%, #1f6647 22%, #1d6a4a 50%, #0b5a78 66%, #1a5f62 80%, #1a6a4c 100%);
  }

  .ball {
    position: absolute;
    left: 10px;
    top: -5px;
  }

  .mark {
    position: absolute;
    top: 6px;
    height: 2px;
  }

  .mark.tall {
    top: 0;
    height: 8px;
  }

  .clocktext {
    position: absolute;
    left: 1190px;
    top: 0;
    height: 8px;
    overflow: hidden;
    line-height: 16px;
    color: #fff;
    font-size: 12px;
    white-space: nowrap;
  }
</style>
